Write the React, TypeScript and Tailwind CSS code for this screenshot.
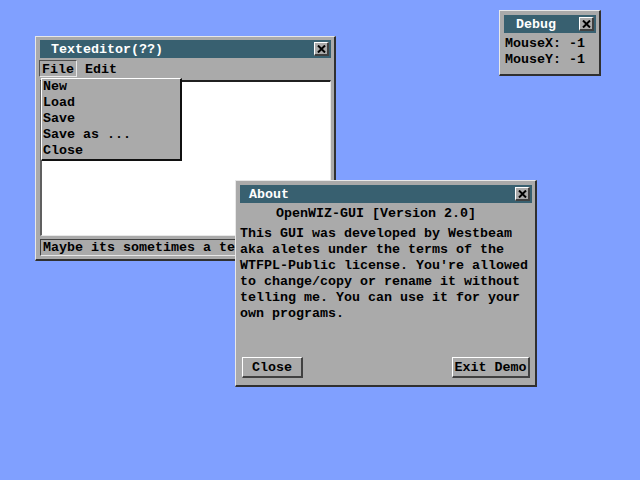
import { ReactNode } from "react"

const font = { fontFamily: '"Liberation Mono", "DejaVu Sans Mono", monospace' }

function CloseBox() {
  return (
    <div className="w-[15px] h-[14px] bg-[#aaaaaa] border-t border-l border-t-white border-l-white border-r-2 border-b-2 border-r-[#404040] border-b-[#404040] flex items-center justify-center">
      <svg width="9" height="8" viewBox="0 0 9 8">
        <path d="M1 0.5 L8 7.5 M8 0.5 L1 7.5" stroke="#000" strokeWidth="2" />
      </svg>
    </div>
  )
}

function TitleBar({ title, pad }: { title: string; pad: string }) {
  return (
    <div className={`h-[18px] bg-[#386070] flex items-center justify-between pr-[2px] ${pad}`}>
      <span className="text-white font-bold leading-none pt-[2px]">{title}</span>
      <CloseBox />
    </div>
  )
}

function Window({ className, children }: { className: string; children: ReactNode }) {
  return (
    <div
      className={`absolute bg-[#aaaaaa] border-t border-l border-t-[#e8e8e8] border-l-[#e8e8e8] border-r-2 border-b-2 border-r-[#303030] border-b-[#303030] pl-[4px] pt-[3px] pr-[3px] pb-[3px] ${className}`}
    >
      {children}
    </div>
  )
}

function Button({ label, width }: { label: string; width: string }) {
  return (
    <button
      className={`${width} h-[21px] bg-[#aaaaaa] border-t border-l border-t-white border-l-white border-r-2 border-b-2 border-r-[#404040] border-b-[#404040] font-bold leading-none pt-[2px]`}
    >
      {label}
    </button>
  )
}

const menuItems = ["New", "Load", "Save", "Save as ...", "Close"]

const aboutLines = [
  "This GUI was developed by Westbeam",
  "aka aletes under the terms of the",
  "WTFPL-Public license. You're allowed",
  "to change/copy or rename it without",
  "telling me. You can use it for your",
  "own programs.",
]

export default function App() {
  return (
    <div className="relative w-[640px] h-[480px] bg-[#80a0ff] overflow-hidden text-[13.33px] text-black" style={font}>
      {/* texteditor */}
      <Window className="left-[35px] top-[36px] w-[301px]">
        <TitleBar title="Texteditor(??)" pad="pl-[11px]" />
        <div className="h-[20px] flex items-end pb-[1px] gap-[2px]">
          <div className="h-[17px] px-[2px] -ml-[1px] flex items-center pt-[2px] border border-t-[#505050] border-l-[#505050] border-b-[#e8e8e8] border-r-[#e8e8e8] font-bold">
            File
          </div>
          <div className="h-[17px] flex items-center pt-[2px] px-[6px] font-bold">Edit</div>
        </div>
        <div className="mt-[2px] h-[156px] bg-white border-t-2 border-l-2 border-t-[#202020] border-l-[#606060] border-b border-r border-b-[#e8e8e8] border-r-[#e8e8e8]" />
        <div className="mt-[3px] h-[17px] border-t border-l border-t-[#404040] border-l-[#404040] border-b border-r border-b-[#e8e8e8] border-r-[#e8e8e8] pl-[2px] flex items-center overflow-hidden whitespace-nowrap font-bold">
          Maybe its sometimes a text editor
        </div>
        <div className="absolute left-[5px] top-[41px] w-[141px] bg-[#aaaaaa] border-t border-l border-t-white border-l-white border-r-2 border-b-2 border-r-[#101010] border-b-[#101010] pl-[1px]">
          {menuItems.map((m) => (
            <div key={m} className="h-[16px] leading-[16px] font-bold whitespace-pre">
              {m}
            </div>
          ))}
        </div>
      </Window>

      {/* about */}
      <Window className="left-[235px] top-[180px] w-[302px] h-[207px] flex flex-col pt-[4px]">
        <TitleBar title="About" pad="pl-[9px]" />
        <div className="h-[20px] pl-[36px] flex items-center pt-[1px] font-bold whitespace-pre">OpenWIZ-GUI [Version 2.0]</div>
        <div className="mt-[3px]">
          {aboutLines.map((l) => (
            <div key={l} className="h-[16px] leading-[16px] font-bold whitespace-pre">
              {l}
            </div>
          ))}
        </div>
        <div className="mt-auto mb-[4px] flex justify-between pl-[2px] pr-[2px]">
          <Button label="Close" width="w-[61px]" />
          <Button label="Exit Demo" width="w-[78px]" />
        </div>
      </Window>

      {/* debug */}
      <Window className="left-[499px] top-[10px] w-[102px] h-[66px] pt-[4px]">
        <TitleBar title="Debug" pad="pl-[12px]" />
        <div className="mt-[3px] pl-[1px]">
          <div className="h-[16px] leading-[16px] font-bold whitespace-pre">MouseX: -1</div>
          <div className="h-[16px] leading-[16px] font-bold whitespace-pre">MouseY: -1</div>
        </div>
      </Window>
    </div>
  )
}
